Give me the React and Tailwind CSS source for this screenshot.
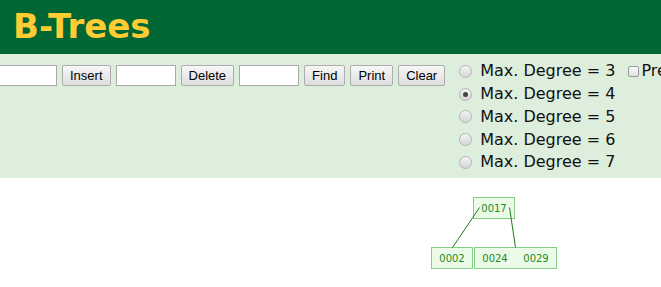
import React from 'react';

const degrees = [3, 4, 5, 6, 7];

const TextBox = () => (
  <input
    type="text"
    className="w-[60px] h-[21px] shrink-0 bg-white border border-[#a9a9a9] outline-none"
  />
);

const Btn = ({ children }) => (
  <button className="h-[21px] shrink-0 px-[7px] border border-[#adadad] rounded-[2px] bg-gradient-to-b from-[#f7f7f7] to-[#dedede] text-[13px] leading-none text-black font-['Liberation_Sans',Arial,sans-serif]">
    {children}
  </button>
);

const Radio = ({ checked }) => (
  <span className="w-[13px] h-[13px] shrink-0 rounded-full border border-[#b5b5b5] bg-gradient-to-b from-[#f4f4f4] to-[#d6d6d6] flex items-center justify-center mr-[8px]">
    {checked && <span className="w-[5px] h-[5px] rounded-full bg-[#444]" />}
  </span>
);

// tree drawing: nodes are drawn first, the link lines go over them
const nodes = [
  { x: 473, y: 197, keys: ['0017'] },
  { x: 431, y: 247, keys: ['0002'] },
  { x: 474, y: 247, keys: ['0024', '0029'] },
];

const links = [
  [479.5, 207.5, 452.5, 247.5],
  [509.5, 207.5, 515.5, 247.5],
];

const TreeCanvas = () => (
  <svg width="661" height="109" viewBox="0 178 661 109" className="block">
    {nodes.map((n, i) => (
      <g key={i}>
        <rect
          x={n.x + 0.5}
          y={n.y + 0.5}
          width={n.keys.length * 41}
          height={21}
          fill="#ebfbe7"
          stroke="#85cf85"
        />
        {n.keys.map((k, j) => (
          <text
            key={k}
            x={n.x + 0.5 + j * 41 + 20.5}
            y={n.y + 15}
            textAnchor="middle"
            fontSize="10"
            fill="#1c8a1c"
            fontFamily="DejaVu Sans, Verdana, sans-serif"
          >
            {k}
          </text>
        ))}
      </g>
    ))}
    {links.map(([x1, y1, x2, y2], i) => (
      <line key={i} x1={x1} y1={y1} x2={x2} y2={y2} stroke="#1e7a1e" strokeWidth="1" />
    ))}
  </svg>
);

export default function App() {
  return (
    <div className="w-[661px] h-[287px] overflow-hidden bg-white font-['DejaVu_Sans',Verdana,sans-serif]">
      {/* Header */}
      <div className="h-[54px] bg-[#006633] pl-[13px] pt-[9px]">
        <h1 className="text-[34px] font-bold leading-none text-[#ffcc33]">B-Trees</h1>
      </div>

      {/* Control band */}
      <div className="h-[124px] bg-[#ddeedd] flex items-start -ml-[3px] whitespace-nowrap">
        <div className="flex items-center gap-[5px] mt-[11px] shrink-0">
          <TextBox />
          <Btn>Insert</Btn>
          <TextBox />
          <Btn>Delete</Btn>
          <TextBox />
          <Btn>Find</Btn>
          <Btn>Print</Btn>
          <Btn>Clear</Btn>
        </div>

        <div className="flex flex-col mt-[6px] ml-[14px] shrink-0">
          {degrees.map((d) => (
            <label key={d} className="h-[22.75px] flex items-center text-[16px] text-[#111]">
              <Radio checked={d === 4} />
              Max. Degree = {d}
            </label>
          ))}
        </div>

        <div className="flex items-center h-[22.75px] mt-[6px] ml-[13px] shrink-0 text-[16px] text-[#111]">
          <span className="w-[11px] h-[11px] border border-[#9a9a9a] rounded-[2px] bg-gradient-to-b from-[#fafafa] to-[#e2e2e2] mr-[2px]" />
          Preemtive Split / Merge (Even max degree only)
        </div>
      </div>

      {/* Canvas */}
      <TreeCanvas />
    </div>
  );
}
